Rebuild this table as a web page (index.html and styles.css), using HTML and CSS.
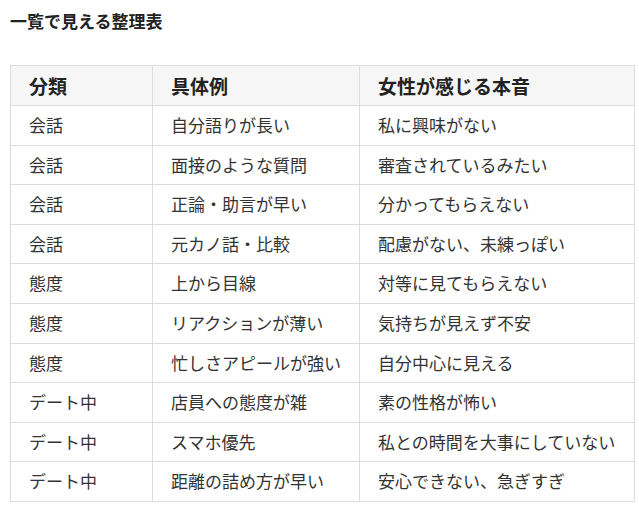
FILE: index.html
```html
<!DOCTYPE html>
<html lang="ja">
<head>
<meta charset="utf-8">
<link rel="stylesheet" href="styles.css">
</head>
<body>
<h2 class="title">一覧で見える整理表</h2>
<table class="grid">
  <colgroup>
    <col class="c1"><col class="c2"><col class="c3">
  </colgroup>
  <thead>
    <tr><th>分類</th><th>具体例</th><th>女性が感じる本音</th></tr>
  </thead>
  <tbody>
    <tr><td>会話</td><td>自分語りが長い</td><td>私に興味がない</td></tr>
    <tr><td>会話</td><td>面接のような質問</td><td>審査されているみたい</td></tr>
    <tr><td>会話</td><td>正論・助言が早い</td><td>分かってもらえない</td></tr>
    <tr><td>会話</td><td>元カノ話・比較</td><td>配慮がない、未練っぽい</td></tr>
    <tr><td>態度</td><td>上から目線</td><td>対等に見てもらえない</td></tr>
    <tr><td>態度</td><td>リアクションが薄い</td><td>気持ちが見えず不安</td></tr>
    <tr><td>態度</td><td>忙しさアピールが強い</td><td>自分中心に見える</td></tr>
    <tr><td>デート中</td><td>店員への態度が雑</td><td>素の性格が怖い</td></tr>
    <tr><td>デート中</td><td>スマホ優先</td><td>私との時間を大事にしていない</td></tr>
    <tr><td>デート中</td><td>距離の詰め方が早い</td><td>安心できない、急ぎすぎ</td></tr>
  </tbody>
</table>
</body>
</html>
```
FILE: styles.css
```css
html, body {
  margin: 0;
  background: #ffffff;
}
body {
  padding: 0 10px;
  font-family: "Noto Sans CJK JP", "Noto Sans", sans-serif;
  color: #333333;
}
.title {
  margin: 9px 0 0;
  font-size: 17px;
  line-height: 24px;
  font-weight: 700;
  color: #222222;
}
.grid {
  margin-top: 32px;
  width: 624px;
  border-collapse: collapse;
  table-layout: fixed;
}
.c1 { width: 142px; }
.c2 { width: 207px; }
.c3 { width: 275px; }
.grid th,
.grid td {
  border: 1px solid #dcdcdc;
  padding: 8px 18px;
  text-align: left;
  white-space: nowrap;
}
.grid th {
  background: #f6f6f6;
  font-size: 19px;
  line-height: 23px;
  font-weight: 700;
  color: #222222;
}
.grid td {
  font-size: 17px;
  line-height: 22.6px;
  font-weight: 400;
  color: #333333;
}
```
